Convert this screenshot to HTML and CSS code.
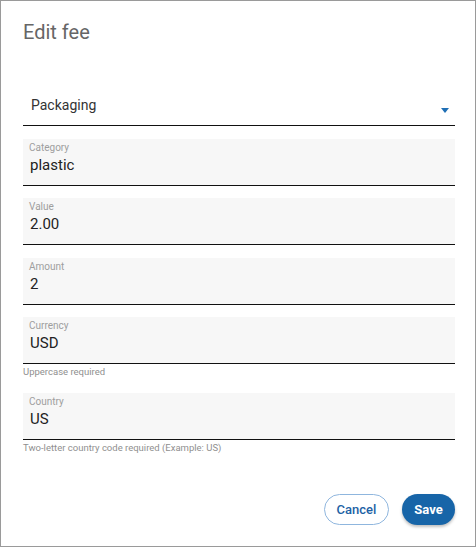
FILE: index.html
```html
<!DOCTYPE html>
<html lang="en">
<head>
<meta charset="utf-8">
<title>Edit fee</title>
<link rel="stylesheet" href="styles.css">
</head>
<body>
<div class="dialog">
  <h1 class="title">Edit fee</h1>
  <div class="select">
    <span class="select-value">Packaging</span>
    <svg class="select-arrow" width="8" height="5" viewBox="0 0 8 5"><path d="M0 0h8L4 5z" fill="#1f6fb5"/></svg>
  </div>
  <div class="field">
    <div class="field-label">Category</div>
    <div class="field-value">plastic</div>
  </div>
  <div class="field">
    <div class="field-label">Value</div>
    <div class="field-value">2.00</div>
  </div>
  <div class="field">
    <div class="field-label">Amount</div>
    <div class="field-value">2</div>
  </div>
  <div class="field">
    <div class="field-label">Currency</div>
    <div class="field-value">USD</div>
  </div>
  <div class="hint">Uppercase required</div>
  <div class="field field-after-hint">
    <div class="field-label">Country</div>
    <div class="field-value">US</div>
  </div>
  <div class="hint">Two-letter country code required (Example: US)</div>
  <div class="actions">
    <button class="btn btn-outline">Cancel</button>
    <button class="btn btn-primary">Save</button>
  </div>
</div>
</body>
</html>
```
FILE: styles.css
```css
* { box-sizing: border-box; }
html, body { margin: 0; padding: 0; background: #fff; }
body { font-family: Roboto, "Liberation Sans", Arial, sans-serif; }

.dialog {
  width: 476px;
  height: 547px;
  border: 1px solid #9a9a9a;
  padding: 19px 20px 0 22px;
  display: flex;
  flex-direction: column;
}

.title {
  margin: 0;
  font-size: 20px;
  line-height: 24px;
  font-weight: 400;
  color: #666;
}

.select {
  margin-top: 36px;
  height: 46px;
  border-bottom: 1px solid #111;
  padding: 15px 6px 0 8px;
  display: flex;
  justify-content: space-between;
  align-items: flex-start;
}
.select-value {
  font-size: 14px;
  line-height: 20px;
  color: #333;
}
.select-arrow {
  margin-top: 13px;
}

.field {
  margin-top: 12.5px;
  background: #f7f7f7;
  border-bottom: 1px solid #111;
  padding: 3px 6px 10px 6px;
}
.field-after-hint { margin-top: 15px; }
.field-label {
  font-size: 10px;
  line-height: 12px;
  color: #9e9e9e;
  margin-bottom: 1px;
}
.field-value {
  font-size: 15px;
  line-height: 20px;
  color: #222;
  padding-left: 1px;
}

.hint {
  font-size: 9.5px;
  line-height: 12px;
  color: #8f8f8f;
  padding-top: 2px;
}

.actions {
  margin-top: 40px;
  display: flex;
  justify-content: flex-end;
  gap: 13px;
}
.btn {
  font-family: Roboto, "Liberation Sans", Arial, sans-serif;
  height: 31px;
  border-radius: 16px;
  font-size: 13px;
  font-weight: 500;
  cursor: pointer;
}
.btn-outline {
  width: 65px;
  background: #fff;
  border: 1px solid #8fb6de;
  color: #1d62a5;
}
.btn-primary {
  width: 53px;
  background: #1765a8;
  border: none;
  color: #fff;
  font-weight: 700;
  box-shadow: 0 2px 3px rgba(0,0,0,0.25);
}
```
